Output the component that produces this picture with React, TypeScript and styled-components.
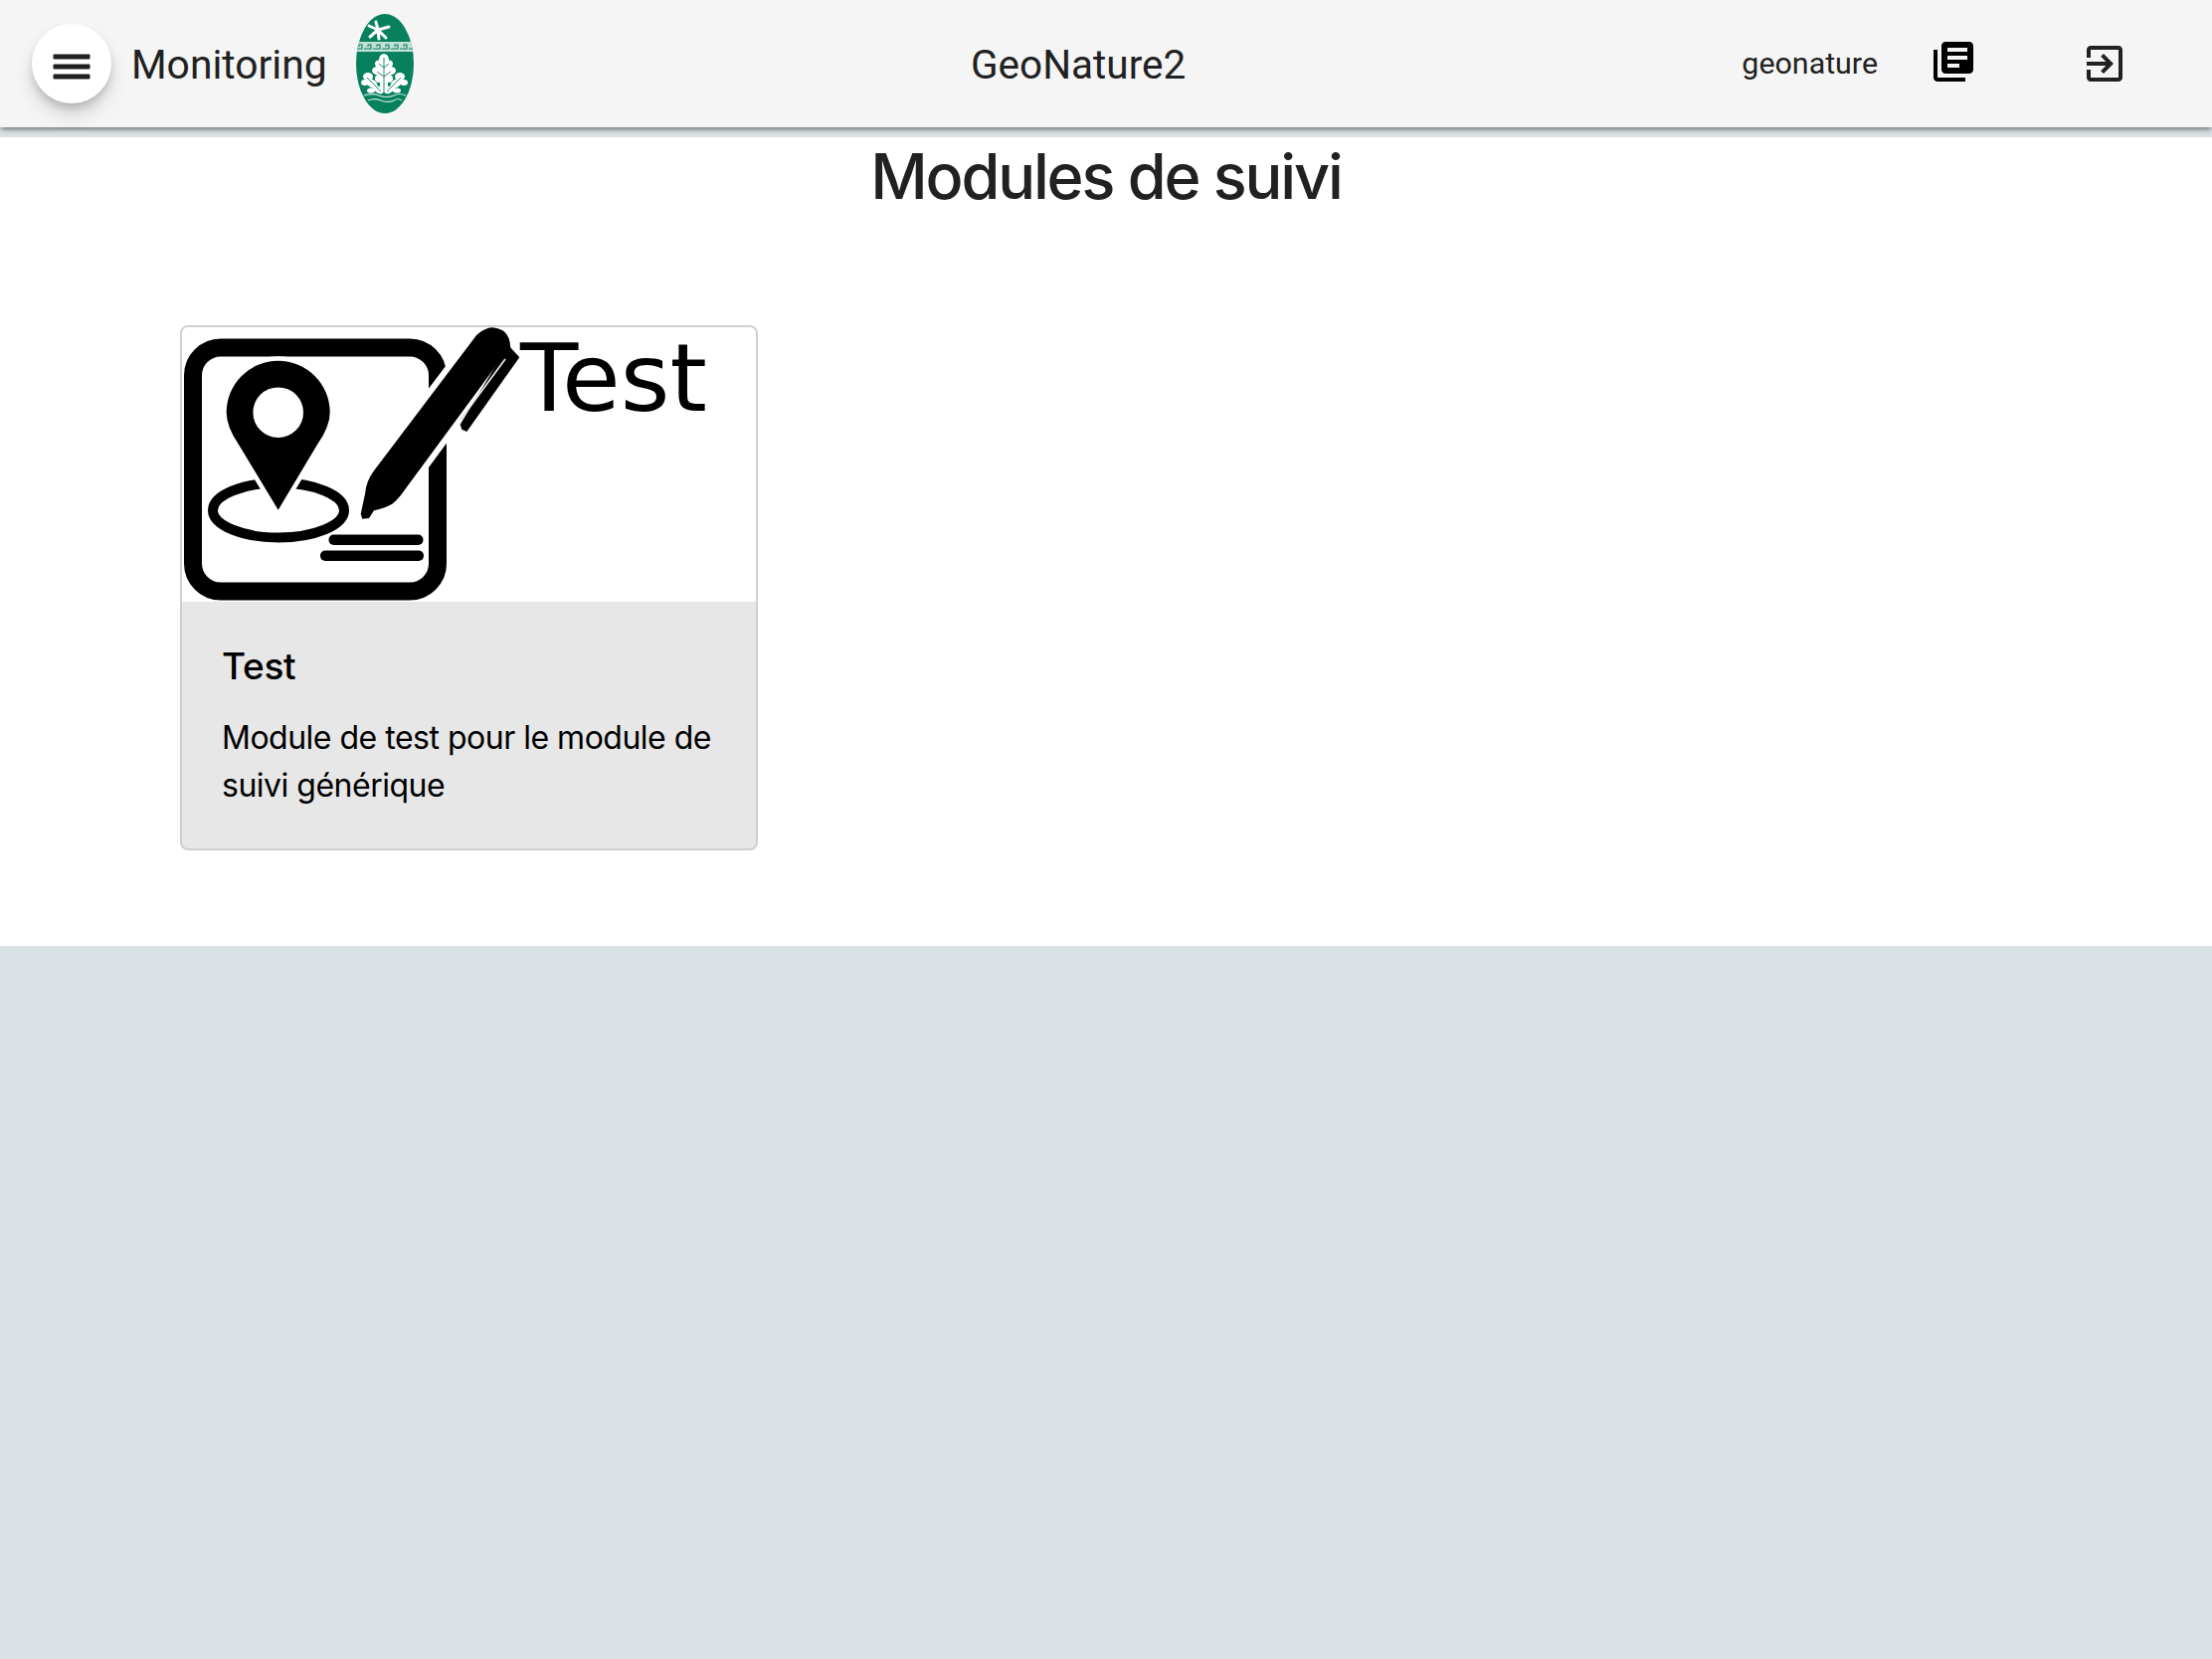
import React from 'react'
import styled, { createGlobalStyle } from 'styled-components'

const GlobalStyle = createGlobalStyle`
  html, body {
    margin: 0;
    padding: 0;
    background: #dbe2e5;
  }
  body {
    min-height: 1668px;
    font-family: Roboto, sans-serif;
  }
`
const NavBar = styled.header`
  height: 128px;
  display: flex;
  align-items: center;
  background: #f5f5f5;
  color: #212121;
  box-shadow: 0 3px 5px -1px rgba(0, 0, 0, 0.5);
  position: relative;
`
const NavLeft = styled.div`
  width: 976px;
  box-sizing: border-box;
  padding-left: 32px;
  display: flex;
  align-items: center;
`
const MenuButton = styled.button`
  width: 80px;
  height: 80px;
  border: 0;
  padding: 6px 0 0;
  border-radius: 50%;
  background: #fff;
  color: #212121;
  display: flex;
  align-items: center;
  justify-content: center;
  box-shadow: 0 6px 10px -2px rgba(0, 0, 0, 0.2), 0 12px 20px 0 rgba(0, 0, 0, 0.12);
`
const AppName = styled.span`
  margin-left: 20px;
  padding-top: 2px;
  font-size: 40.8px;
  line-height: 48px;
  width: 226px;
`
const Logo = styled.svg`
  width: 58px;
  height: 100px;
  display: block;
`
const Instance = styled.span`
  font-size: 40.5px;
  line-height: 48px;
  padding-top: 2px;
`
const NavRight = styled.div`
  margin-left: auto;
  display: flex;
  align-items: center;
  padding-right: 84px;
`
const UserName = styled.span`
  font-size: 30.4px;
  line-height: 40px;
  color: #212121;
  margin-right: 52px;
`
const IconButton = styled.span<{ $gap?: number; $lift?: number; $color: string }>`
  display: block;
  width: 48px;
  height: 48px;
  color: ${(p) => p.$color};
  margin-right: ${(p) => p.$gap || 0}px;
  margin-top: ${(p) => -(p.$lift || 0)}px;
`
const Main = styled.main`
  margin-top: 10px;
  height: 813px;
  background: #fff;
  box-sizing: border-box;
  padding: 1px 181px 0;
`
const Title = styled.h1`
  margin: 0 0 111px;
  text-align: center;
  font-family: Inter, sans-serif;
  font-weight: 500;
  font-size: 63px;
  letter-spacing: -2.2px;
  line-height: 77px;
  color: #212121;
`
const Card = styled.article`
  width: 581px;
  box-sizing: border-box;
  border: 2px solid #cfcfcf;
  border-radius: 8px;
  background: #e7e7e7;
`
const CardImage = styled.svg`
  display: block;
  width: 577px;
  height: 276px;
  background: #fff;
  border-radius: 6px 6px 0 0;
  overflow: visible;
`
const BlurredArt = styled.g`
  filter: blur(0.6px);
`
const CardBody = styled.div`
  padding: 41px 40px 39px;
  font-family: Inter, sans-serif;
  color: #000;
`
const CardTitle = styled.h5`
  margin: 0 0 24px;
  font-size: 37px;
  font-weight: 500;
  letter-spacing: -0.3px;
  line-height: 48px;
`
const CardText = styled.p`
  margin: 0;
  font-size: 32px;
  letter-spacing: -0.5px;
  line-height: 48px;
  font-weight: 400;
`

const GREEN = '#06805d'

const LogoIcon = () => (
  <Logo viewBox="0 0 58 100">
    <defs>
      <clipPath id="logo-shape">
        <ellipse cx="29" cy="50" rx="29" ry="50" />
      </clipPath>
    </defs>
    <g clipPath="url(#logo-shape)">
      <rect width="58" height="100" fill={GREEN} />
      <rect y="28" width="58" height="10" fill="#c4e0d6" />
      <path
        d="M-1 35H6V31H3V33M8 35H15V31H12V33M17 35H24V31H21V33M26 35H33V31H30V33M35 35H42V31H39V33M44 35H51V31H48V33M53 35H60V31H57V33"
        stroke={GREEN}
        strokeWidth="1.1"
        fill="none"
      />
    </g>
    <path
      d="M22 16L13 12M22 16L33 13M22 16L14 23M22 16L30 24M22 16L20 8M22 16L23 25"
      stroke="#fff"
      strokeWidth="3"
      strokeLinecap="round"
    />
    <g fill="#fff">
      <ellipse cx="28" cy="46" rx="5" ry="6" />
      <ellipse cx="23" cy="50" rx="4" ry="3.5" />
      <ellipse cx="33" cy="50" rx="4" ry="3.5" />
      <ellipse cx="21" cy="57" rx="5" ry="4" />
      <ellipse cx="35" cy="57" rx="5" ry="4" />
      <ellipse cx="28" cy="58" rx="7" ry="8" />
      <ellipse cx="23" cy="65" rx="4" ry="4" />
      <ellipse cx="33" cy="65" rx="4" ry="4" />
      <path d="M25 62H31L33 79H23Z" />
      <ellipse cx="12" cy="63" rx="5" ry="4" />
      <ellipse cx="9" cy="69" rx="4" ry="3" />
      <ellipse cx="16" cy="70" rx="6" ry="4" transform="rotate(35 16 70)" />
      <ellipse cx="22" cy="76" rx="6" ry="3" transform="rotate(35 22 76)" />
      <ellipse cx="15" cy="77" rx="4" ry="2.5" />
      <ellipse cx="44" cy="63" rx="5" ry="4" />
      <ellipse cx="48" cy="69" rx="4" ry="3" />
      <ellipse cx="40" cy="70" rx="6" ry="4" transform="rotate(-35 40 70)" />
      <ellipse cx="34" cy="76" rx="6" ry="3" transform="rotate(-35 34 76)" />
      <ellipse cx="41" cy="77" rx="4" ry="2.5" />
    </g>
    <path
      d="M28 44V79M28 54L23 50M28 54L33 50M28 63L21 58M28 63L35 58M11 64L25 78M45 64L31 78"
      stroke={GREEN}
      strokeWidth="0.9"
      fill="none"
    />
    <g stroke="#cfe6de" strokeWidth="1.2" fill="none">
      <path d="M8 82C14 80 18 80 23 82S33 84 38 82 44 80 50 82" />
      <path d="M12 87C16 85 20 85 25 87S34 89 38 87 42 85 46 87" />
    </g>
  </Logo>
)

const PEN =
  'M296.3 7.7L193 144.3Q185 155 184 167.7L179.7 187.7L181.3 192.7L188 192L193 184.3Q204 182 211.3 177.7Q216 174 219.7 169.3L323 29L330.3 21Q330 8 322 3Q312 -2 305 2Q300 4 296.3 7.7Z'
const CLIP = 'M328 18L339.3 30.3L286.3 105L281.3 102.7L279.7 97.7Z'
const PIN = 'M96.7 183.7L57 118Q44.7 100 44.7 85.7A52 52 0 0 1 148.7 85.7Q148.7 100 136 118Z'

const ModuleImage = () => (
  <CardImage viewBox="0 0 577 276">
    <defs>
      <clipPath id="image-area">
        <rect width="577" height="276" />
      </clipPath>
    </defs>
    <BlurredArt clipPath="url(#image-area)">
      <rect x="11" y="20.5" width="246" height="245" rx="28" fill="none" stroke="#000" strokeWidth="18" />
      <ellipse cx="97" cy="184" rx="66" ry="27.5" fill="#fff" stroke="#000" strokeWidth="10" />
      <path d={PIN} fill="#000" stroke="#fff" strokeWidth="9" paintOrder="stroke" />
      <circle cx="96.7" cy="85.7" r="25.3" fill="#fff" />
      <path d={PEN} fill="#000" stroke="#fff" strokeWidth="12" paintOrder="stroke" />
      <path d={CLIP} fill="#000" />
      <path d="M325 32L280 93" stroke="#e4e4e4" strokeWidth="1.8" />
      <rect x="147.5" y="208.5" width="95" height="10.5" rx="5" fill="#000" />
      <rect x="139" y="224.5" width="104" height="10.5" rx="5" fill="#000" />
    </BlurredArt>
    <text
      x="340"
      y="84"
      fontFamily="'DejaVu Sans', sans-serif"
      fontSize="95"
      textLength="188"
      lengthAdjust="spacingAndGlyphs"
      fill="#000"
    >
      Test
    </text>
  </CardImage>
)

const App: React.FC = () => {
  return (
    <>
      <GlobalStyle />
      <NavBar>
        <NavLeft>
          <MenuButton aria-label="menu">
            <svg width="48" height="48" viewBox="0 0 24 24" fill="currentColor" stroke="currentColor" strokeWidth="0.5">
              <path d="M3 18h18v-2H3v2zm0-5h18v-2H3v2zm0-7v2h18V6H3z" />
            </svg>
          </MenuButton>
          <AppName>Monitoring</AppName>
          <LogoIcon />
        </NavLeft>
        <Instance>GeoNature2</Instance>
        <NavRight>
          <UserName>geonature</UserName>
          <IconButton $gap={104} $lift={4} $color="#000">
            <svg width="48" height="48" viewBox="0 0 24 24" fill="currentColor">
              <path d="M4 6H2v14c0 1.1.9 2 2 2h14v-2H4V6zm16-4H8c-1.1 0-2 .9-2 2v12c0 1.1.9 2 2 2h12c1.1 0 2-.9 2-2V4c0-1.1-.9-2-2-2zm-1 9H9V9h10v2zm-4 4H9v-2h6v2zm4-8H9V5h10v2z" />
            </svg>
          </IconButton>
          <IconButton $color="#212121">
            <svg width="48" height="48" viewBox="0 0 24 24" fill="currentColor">
              <path d="M10.09 15.59L11.5 17l5-5-5-5-1.41 1.41L12.67 11H3v2h9.67l-2.58 2.59zM19 3H5c-1.11 0-2 .9-2 2v4h2V5h14v14H5v-4H3v4c0 1.1.89 2 2 2h14c1.1 0 2-.9 2-2V5c0-1.1-.9-2-2-2z" />
            </svg>
          </IconButton>
        </NavRight>
      </NavBar>
      <Main>
        <Title>Modules de suivi</Title>
        <Card>
          <ModuleImage />
          <CardBody>
            <CardTitle>Test</CardTitle>
            <CardText>Module de test pour le module de suivi générique</CardText>
          </CardBody>
        </Card>
      </Main>
    </>
  )
}

export default App
